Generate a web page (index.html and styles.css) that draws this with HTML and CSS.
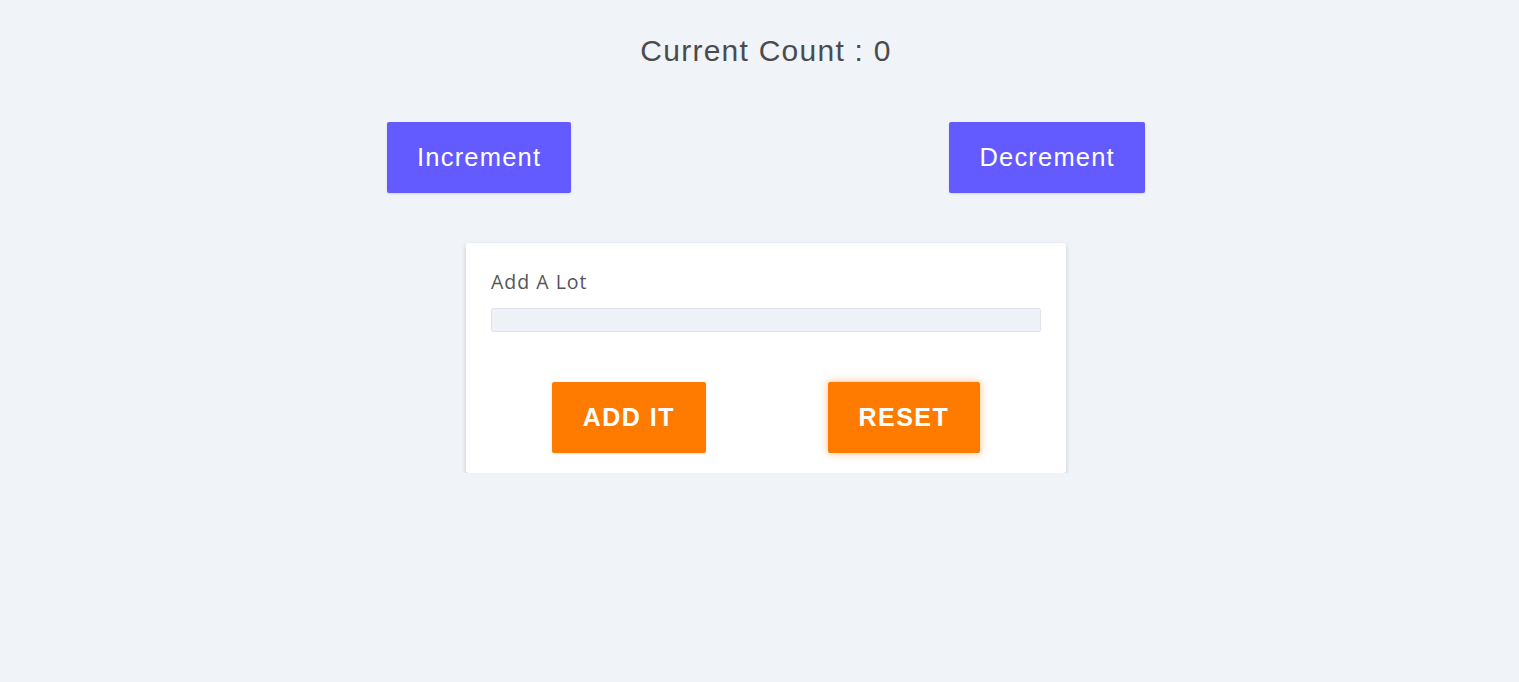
FILE: index.html
```html
<!DOCTYPE html>
<html>
<head>
<meta charset="utf-8">
<link rel="stylesheet" href="styles.css">
</head>
<body>
<main class="app">
  <h1 class="count">Current Count : 0</h1>
  <div class="controls">
    <button class="btn btn-purple">Increment</button>
    <button class="btn btn-purple">Decrement</button>
  </div>
  <section class="card">
    <label class="label" for="lot">Add A Lot</label>
    <input id="lot" class="input" type="text">
    <div class="card-actions">
      <button class="btn btn-orange">ADD IT</button>
      <button class="btn btn-orange btn-glow">RESET</button>
    </div>
  </section>
</main>
</body>
</html>
```
FILE: styles.css
```css
html, body {
  margin: 0;
  padding: 0;
  background: #f0f4f9;
}
body {
  font-family: "Liberation Sans", Arial, sans-serif;
  color: #4a4a4a;
}
.app {
  display: flex;
  flex-direction: column;
  align-items: center;
  padding: 33px 0 0 13px;
}
.count {
  margin: 0;
  font-size: 30px;
  font-weight: normal;
  letter-spacing: 1.25px;
  line-height: 36px;
  color: #4b4b4b;
}
.controls {
  width: 1136px;
  display: flex;
  justify-content: space-around;
  margin-top: 53px;
}
.btn {
  border: none;
  border-radius: 2px;
  cursor: pointer;
  font-family: "Liberation Sans", Arial, sans-serif;
  height: 71px;
  color: #fff;
}
.btn-purple {
  background: #635bff;
  font-size: 25.5px;
  letter-spacing: 1.2px;
  padding: 0 30px;
  box-shadow: 0 1px 2px rgba(0,0,0,0.12);
}
.card {
  margin-top: 50px;
  width: 600px;
  box-sizing: border-box;
  background: #fff;
  border-radius: 3px;
  box-shadow: 0 2px 5px rgba(0,0,0,0.18);
  padding: 25px 25px 20px;
  display: flex;
  flex-direction: column;
}
.label {
  font-family: "Open Sans", sans-serif;
  font-size: 19.5px;
  letter-spacing: 1px;
  color: #555;
  line-height: 28px;
}
.input {
  margin-top: 12px;
  height: 24px;
  box-sizing: border-box;
  border: 1px solid #dfe3ea;
  border-radius: 2px;
  background: #eef2f7;
  padding: 0 6px;
}
.card-actions {
  display: flex;
  justify-content: space-around;
  margin-top: 50px;
}
.btn-orange {
  background: #ff7b00;
  font-size: 25px;
  font-weight: bold;
  letter-spacing: 1.5px;
  padding: 0 30.5px;
  box-shadow: 0 1px 2px rgba(0,0,0,0.12);
}
.btn-glow {
  box-shadow: 0 0 8px rgba(255,123,0,0.5);
}
```
